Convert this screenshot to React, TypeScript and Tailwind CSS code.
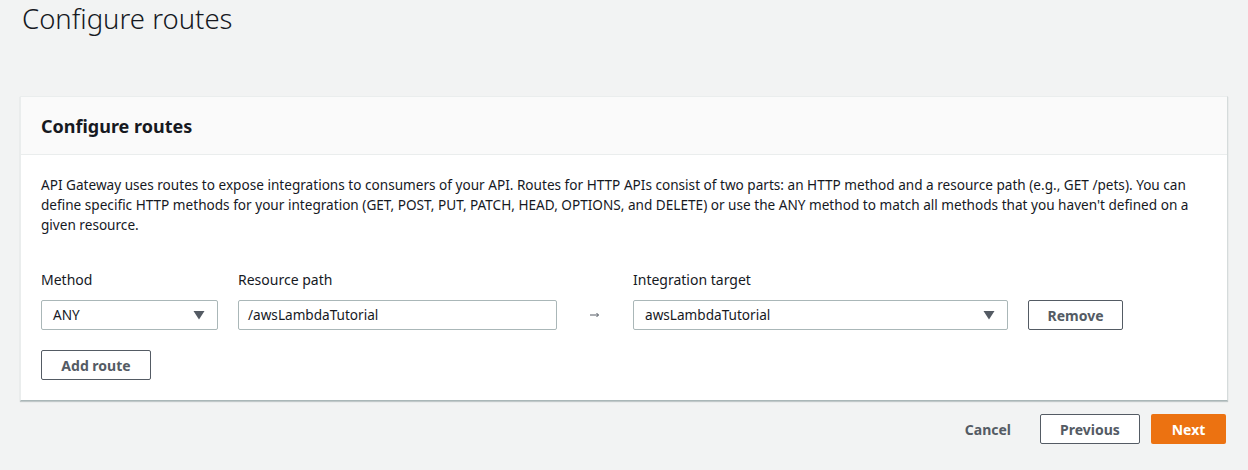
export default function App() {
  return (
    <div className="w-[1248px] h-[470px] overflow-hidden bg-[#f2f3f3] font-['Noto_Sans',sans-serif] text-[#16191f]">
      <h1 className="pl-[22px] pt-[1px] text-[27.5px] leading-[36px] font-light">
        Configure routes
      </h1>

      <div className="mx-[20px] mt-[59px] bg-white border border-[#eaeded] border-b-[#aab7b8] border-r-[#d5dbdb] shadow-[0_1px_1px_0_rgba(0,28,36,0.2)]">
        <div className="h-[58px] px-[20px] flex items-center bg-[#fafafa] border-b border-[#eaeded]">
          <h2 className="text-[18px] leading-[22px] font-bold">Configure routes</h2>
        </div>

        <div className="px-[20px] pt-[20px] pb-[20px]">
          <p className="text-[13.6px] leading-[20px]">
            API Gateway uses routes to expose integrations to consumers of your API. Routes for HTTP
            APIs consist of two parts: an HTTP method and a resource path (e.g., GET /pets). You can
            define specific HTTP methods for your integration (GET, POST, PUT, PATCH, HEAD, OPTIONS,
            and DELETE) or use the ANY method to match all methods that you haven't defined on a
            given resource.
          </p>

          <div className="mt-[35px] flex items-end">
            <div className="w-[177px]">
              <div className="text-[14px] leading-[20px] mb-[10px]">Method</div>
              <Select value="ANY" />
            </div>
            <div className="w-[319px] ml-[20px]">
              <div className="text-[14px] leading-[20px] mb-[10px]">Resource path</div>
              <div className="h-[30px] border border-[#aab7b8] rounded-[2px] px-[9px] flex items-center text-[13.6px]">
                /awsLambdaTutorial
              </div>
            </div>
            <div className="w-[76px] h-[30px] flex items-center justify-center">
              <svg width="10" height="6" viewBox="0 0 10 6">
                <path d="M0 3h8.5M6.5 1l2 2-2 2" stroke="#545b64" strokeWidth="1" fill="none" />
              </svg>
            </div>
            <div className="w-[375px]">
              <div className="text-[14px] leading-[20px] mb-[10px]">Integration target</div>
              <Select value="awsLambdaTutorial" />
            </div>
            <button className="ml-[20px] w-[95px] h-[30px] border border-[#545b64] rounded-[2px] text-[14px] font-bold text-[#545b64]">
              Remove
            </button>
          </div>

          <button className="mt-[20px] w-[110px] h-[30px] border border-[#545b64] rounded-[2px] text-[14px] font-bold text-[#545b64]">
            Add route
          </button>
        </div>
      </div>

      <div className="mt-[13px] mr-[22px] flex justify-end items-center gap-[11px]">
        <button className="h-[30px] px-[20px] mr-[-2px] text-[14px] font-bold text-[#545b64]">Cancel</button>
        <button className="h-[30px] w-[100px] border border-[#545b64] rounded-[2px] bg-white text-[14px] font-bold text-[#545b64]">
          Previous
        </button>
        <button className="h-[30px] w-[75px] rounded-[2px] bg-[#ec7211] text-[14px] font-bold text-white">
          Next
        </button>
      </div>
    </div>
  );
}

function Select({ value }: { value: string }) {
  return (
    <div className="h-[30px] border border-[#aab7b8] rounded-[2px] pl-[11px] pr-[12px] flex items-center justify-between text-[13.6px]">
      <span>{value}</span>
      <svg width="12" height="10" viewBox="0 0 12 10">
        <path d="M0.5 1h11L6 9.5z" fill="#545b64" />
      </svg>
    </div>
  );
}
